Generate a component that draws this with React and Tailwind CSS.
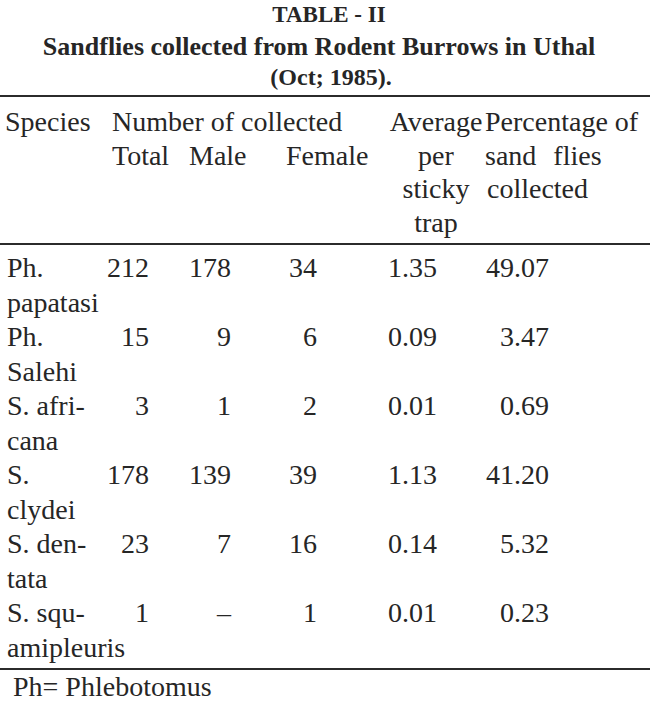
import React from "react";

const rows = [
  ["Ph.", "papatasi", "212", "178", "34", "1.35", "49.07"],
  ["Ph.", "Salehi", "15", "9", "6", "0.09", "3.47"],
  ["S. afri-", "cana", "3", "1", "2", "0.01", "0.69"],
  ["S.", "clydei", "178", "139", "39", "1.13", "41.20"],
  ["S. den-", "tata", "23", "7", "16", "0.14", "5.32"],
  ["S. squ-", "amipleuris", "1", "–", "1", "0.01", "0.23"],
];

export default function App() {
  return (
    <div className="w-[650px] h-[713px] bg-white text-[#262626] overflow-hidden font-['Liberation_Serif','Times_New_Roman',Times,'DejaVu_Serif',serif]">
      {/* Title */}
      <div className="flex flex-col items-center font-bold">
        <div className="text-[23px] leading-[30px] pl-[8px]">TABLE - II</div>
        <div className="text-[26px] leading-[34px] pr-[12px]">
          Sandflies collected from Rodent Burrows in Uthal
        </div>
        <div className="text-[24px] leading-[26px] pl-[12px]">(Oct; 1985).</div>
      </div>

      <div className="mt-[5px] h-[2px] bg-[#2b2b2b]" />

      {/* Header */}
      <div className="grid grid-cols-[112px_275px_98px_1fr] text-[28px] leading-[33.5px] pt-[8px] pb-[4px]">
        <div className="pl-[5px]">Species</div>
        <div className="flex flex-col">
          <div>Number of collected</div>
          <div className="grid grid-cols-[77px_97px_auto]">
            <span>Total</span>
            <span>Male</span>
            <span>Female</span>
          </div>
        </div>
        <div className="flex flex-col items-center">
          <span>Average</span>
          <span>per</span>
          <span>sticky</span>
          <span>trap</span>
        </div>
        <div className="flex flex-col">
          <span className="whitespace-nowrap">Percentage of</span>
          <span className="[word-spacing:10px]">sand flies</span>
          <span className="pl-[2px]">collected</span>
        </div>
      </div>

      <div className="h-[2px] bg-[#2b2b2b]" />

      {/* Body */}
      <div className="flex flex-col text-[28px] leading-[34.5px] pt-[6px] pb-[3px]">
        {rows.map((r, i) => (
          <div
            key={i}
            className="grid grid-cols-[100px_49px_82px_86px_120px_112px]"
          >
            <div className="pl-[7px] flex flex-col whitespace-nowrap">
              <span>{r[0]}</span>
              <span>{r[1]}</span>
            </div>
            <div className="text-right">{r[2]}</div>
            <div className="text-right">{r[3]}</div>
            <div className="text-right">{r[4]}</div>
            <div className="text-right">{r[5]}</div>
            <div className="text-right">{r[6]}</div>
          </div>
        ))}
      </div>

      <div className="h-[2px] bg-[#2b2b2b]" />

      <div className="pl-[13px] text-[28px] leading-[34px]">Ph= Phlebotomus</div>
    </div>
  );
}
